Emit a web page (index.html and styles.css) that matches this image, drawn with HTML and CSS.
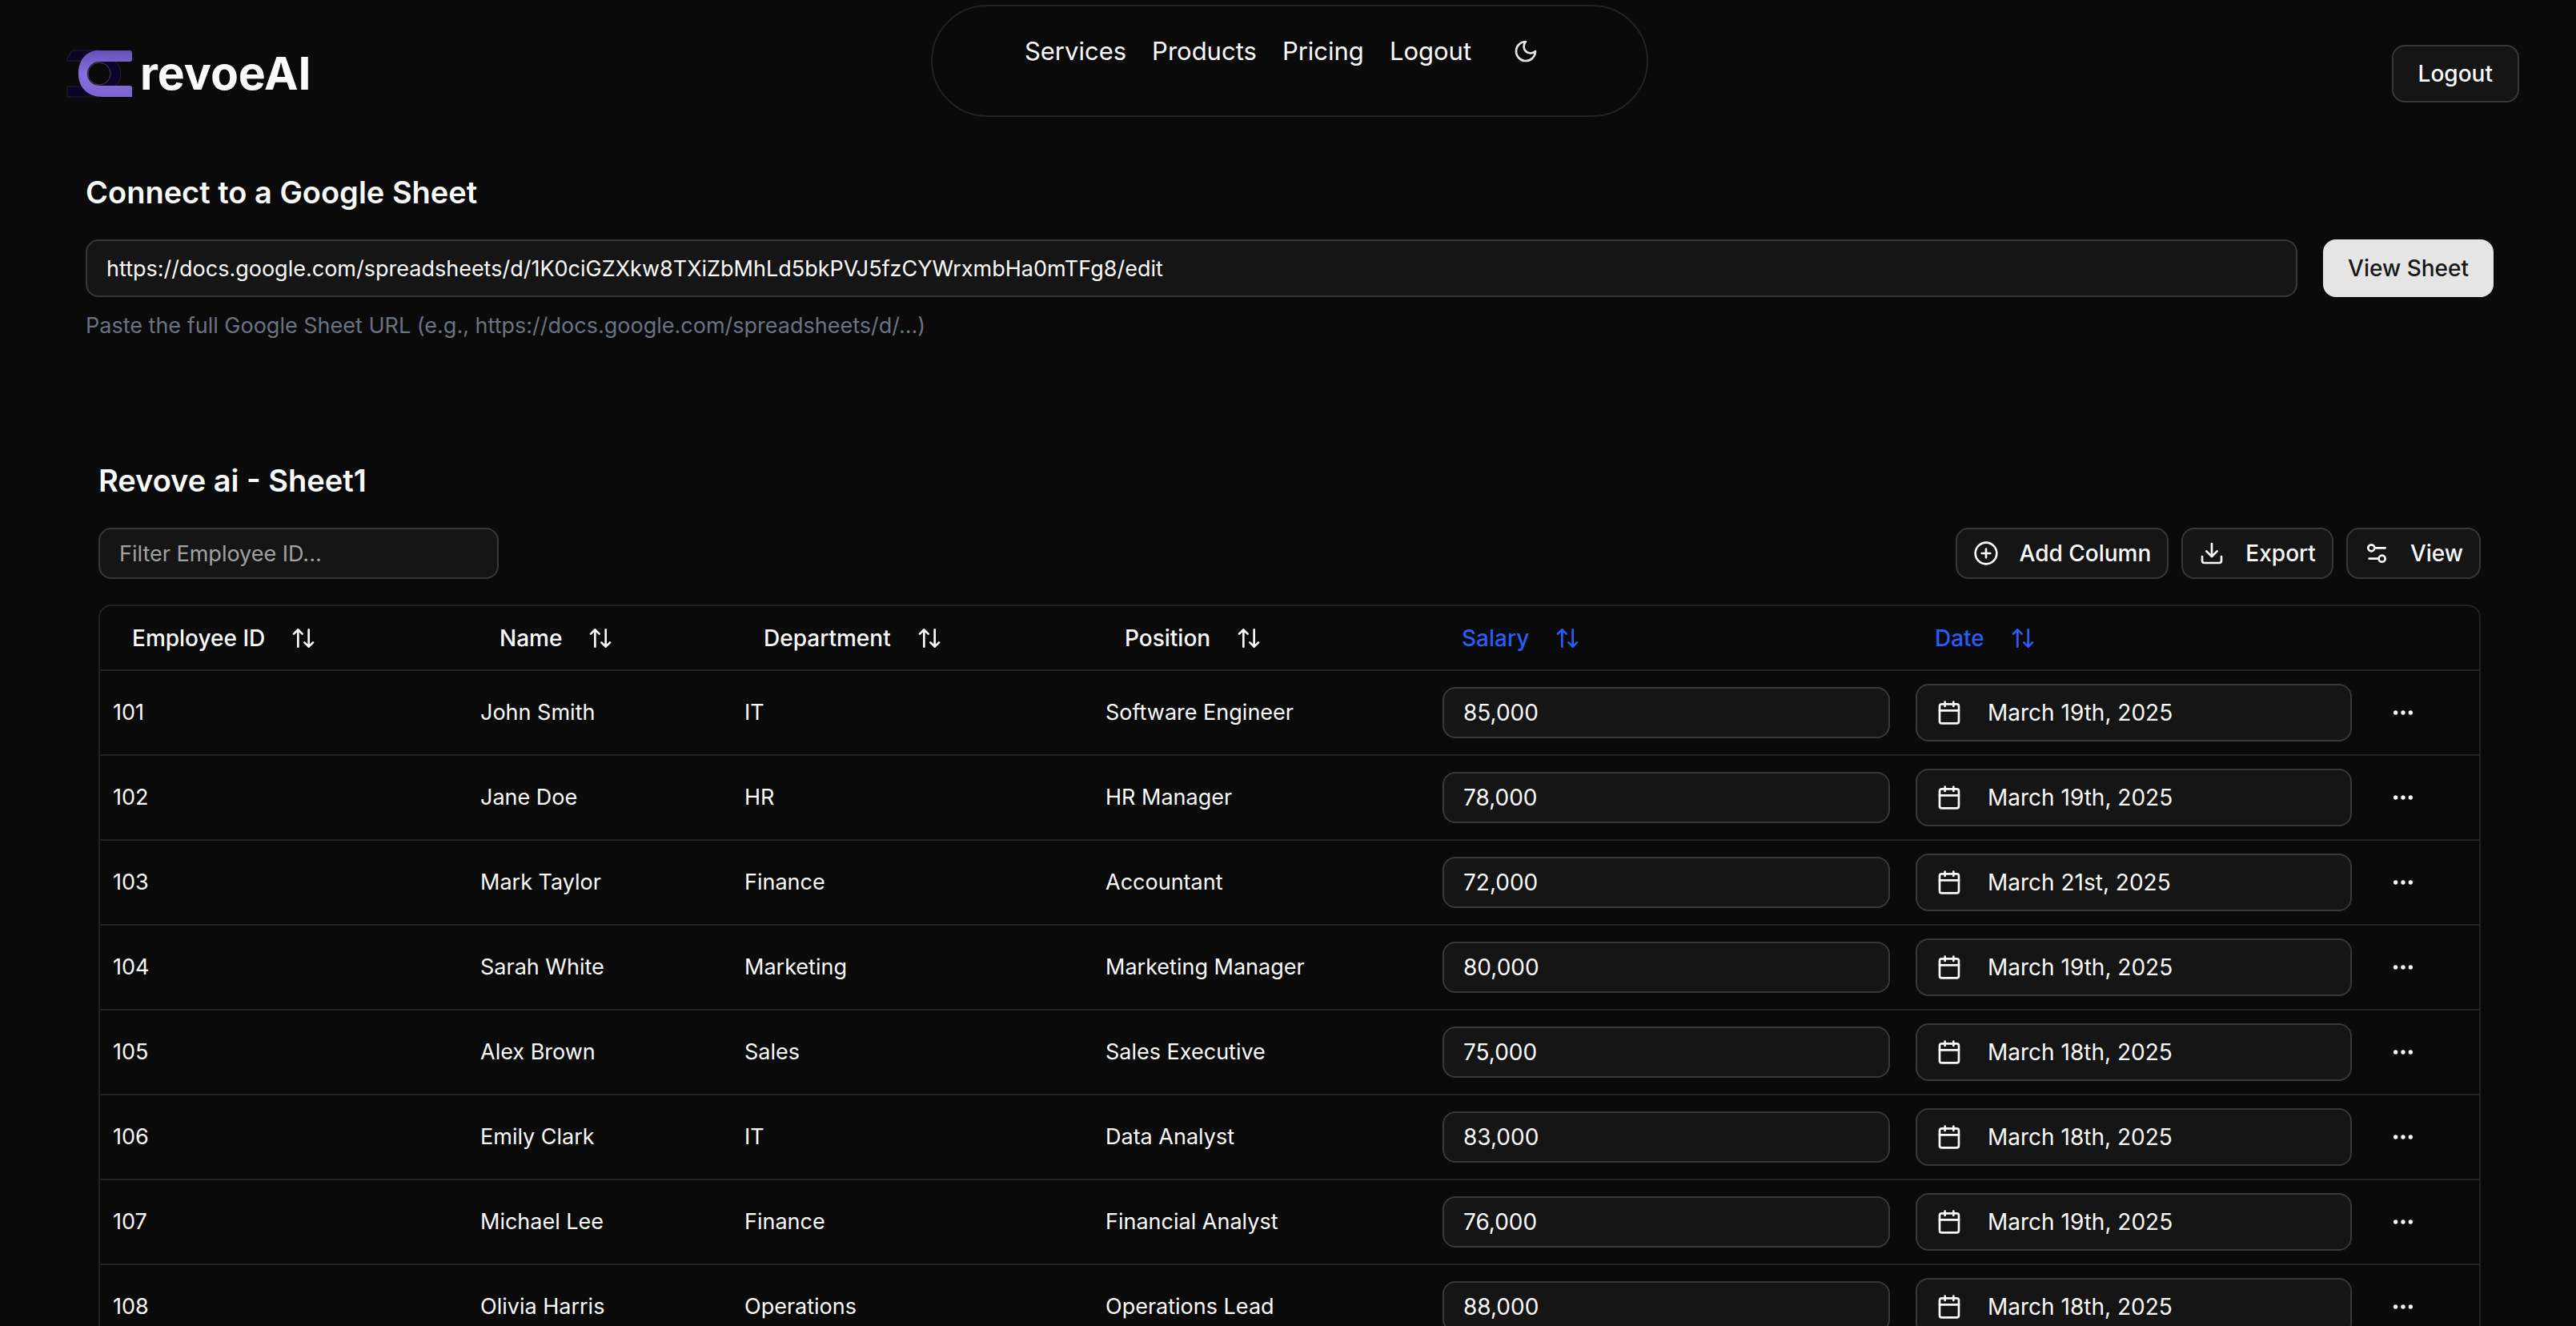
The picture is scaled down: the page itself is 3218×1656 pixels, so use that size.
FILE: index.html
```html
<!DOCTYPE html>
<html lang="en">
<head>
<meta charset="utf-8">
<title>revoeAI</title>
<link rel="stylesheet" href="styles.css">
</head>
<body>
<svg class="sprite" aria-hidden="true">
  <symbol id="sort" viewBox="0 0 24 24"><path d="m3 8 4-4 4 4M7 4v16M21 16l-4 4-4-4M17 20V4"/></symbol>
  <symbol id="calendar" viewBox="0 0 24 24"><path d="M8 2v4M16 2v4M3 10h18"/><rect x="3" y="4" width="18" height="18" rx="2"/></symbol>
  <symbol id="dots" viewBox="0 0 24 24"><circle cx="12" cy="12" r="1"/><circle cx="19" cy="12" r="1"/><circle cx="5" cy="12" r="1"/></symbol>
</svg>
<header class="topbar">
  <a class="brand" href="#">
    <svg class="brand-mark" viewBox="0 0 82 60" aria-hidden="true">
      <defs><linearGradient id="mark" x1="0" y1="0" x2="0" y2="1"><stop offset="0" stop-color="#6650b8"/><stop offset=".5" stop-color="#8470dc"/><stop offset="1" stop-color="#7c64d2"/></linearGradient></defs>
      <path d="M7 1H40V14H1V11Z M1 46H40V59H1Z M41 3H60V14Q68 20 68 30T60 46H41Z" fill="#0c0428" stroke="#25212f"/>
      <path d="M37 1H79Q82 1 82 4V12Q82 15 79 15H41A15 15 0 0 0 41 45H79Q82 45 82 48V59H45C27 59 15 48 15 30C15 13 24 3 37 1Z" fill="url(#mark)"/>
      <circle cx="41" cy="30" r="14" fill="#0a0a0a" stroke="#4b4560"/>
    </svg>
    <span>revoeAI</span>
  </a>
  <nav class="menu">
    <a href="#">Services</a>
    <a href="#">Products</a>
    <a href="#">Pricing</a>
    <a href="#">Logout</a>
    <button class="icon-button theme" type="button" aria-label="Toggle theme"><svg class="icon" viewBox="0 0 24 24"><path d="M12 3a6 6 0 0 0 9 9 9 9 0 1 1-9-9Z"/></svg></button>
  </nav>
  <button class="button logout" type="button">Logout</button>
</header>
<main class="page">
  <form class="connect">
    <h2><label for="url">Connect to a Google Sheet</label></h2>
    <div class="connect-row">
      <input class="field url" id="url" type="text" value="https://docs.google.com/spreadsheets/d/1K0ciGZXkw8TXiZbMhLd5bkPVJ5fzCYWrxmbHa0mTFg8/edit">
      <button class="button primary" type="button">View Sheet</button>
    </div>
    <p class="hint">Paste the full Google Sheet URL (e.g., https://docs.google.com/spreadsheets/d/...)</p>
  </form>
  <section class="sheet">
    <h2>Revove ai - Sheet1</h2>
    <div class="toolbar">
      <input class="field small filter" type="text" placeholder="Filter Employee ID..." aria-label="Filter Employee ID">
      <button class="button small" type="button"><svg class="icon" viewBox="0 0 24 24"><circle cx="12" cy="12" r="10"/><path d="M8 12h8M12 8v8"/></svg>Add Column</button>
      <button class="button small" type="button"><svg class="icon" viewBox="0 0 24 24"><path d="M21 15v4a2 2 0 0 1-2 2H5a2 2 0 0 1-2-2v-4M7 10l5 5 5-5M12 15V3"/></svg>Export</button>
      <button class="button small" type="button"><svg class="icon" viewBox="0 0 24 24"><path d="M20 7h-9M14 17H5"/><circle cx="17" cy="17" r="3"/><circle cx="7" cy="7" r="3"/></svg>View</button>
    </div>
    <div class="table-frame">
      <table>
        <colgroup><col class="c-id"><col class="c-name"><col class="c-dept"><col class="c-pos"><col class="c-salary"><col class="c-date"><col class="c-actions"></colgroup>
        <thead>
          <tr>
            <th><button class="sort" type="button">Employee ID<svg class="icon"><use href="#sort"/></svg></button></th>
            <th><button class="sort" type="button">Name<svg class="icon"><use href="#sort"/></svg></button></th>
            <th><button class="sort" type="button">Department<svg class="icon"><use href="#sort"/></svg></button></th>
            <th><button class="sort" type="button">Position<svg class="icon"><use href="#sort"/></svg></button></th>
            <th><button class="sort custom" type="button">Salary<svg class="icon"><use href="#sort"/></svg></button></th>
            <th><button class="sort custom" type="button">Date<svg class="icon"><use href="#sort"/></svg></button></th>
            <th></th>
          </tr>
        </thead>
        <tbody id="rows"></tbody>
      </table>
    </div>
  </section>
</main>
<script src="rows.js"></script>
</body>
</html>
```
FILE: styles.css
```css
:root {
  --bg: #0a0a0a;
  --text: #fafafa;
  --surface: #151515;
  --line: #222222;
  --control-line: #383838;
  --accent: #2b5cf6;
}

* {
  box-sizing: border-box;
}

html {
  height: 100%;
  overflow: hidden;
}

body {
  margin: 0;
  height: 100%;
  overflow: hidden;
  background: var(--bg);
  color: var(--text);
  font: 28px/40px Inter, "Liberation Sans", sans-serif;
}

a {
  color: inherit;
  text-decoration: none;
}

button,
input {
  font: inherit;
  color: inherit;
}

h2 {
  margin: 0;
  font-size: 38px;
  line-height: 56px;
  font-weight: 600;
}

.sprite {
  display: none;
}

.icon {
  width: 32px;
  height: 32px;
  flex: none;
  fill: none;
  stroke: currentColor;
  stroke-width: 2;
  stroke-linecap: round;
  stroke-linejoin: round;
}

/* Top bar */
.topbar {
  display: grid;
  grid-template-columns: 1fr 896px 1fr;
  align-items: start;
  padding: 6px 71px 0 75px;
}

.brand {
  display: flex;
  align-items: center;
  gap: 10px;
  padding: 50px 0 0 8px;
  font-size: 57px;
  line-height: 72px;
  font-weight: 700;
}

.brand-mark {
  width: 82px;
  height: 60px;
}

.menu {
  display: flex;
  justify-content: center;
  align-items: center;
  gap: 32px;
  padding: 20px 0 44px;
  border: 2px solid var(--line);
  border-radius: 70px;
  font-size: 31px;
}

.icon-button {
  display: flex;
  align-items: center;
  justify-content: center;
  width: 64px;
  height: 64px;
  padding: 0;
  border: 0;
  background: none;
}

.theme {
  width: 72px;
  height: 72px;
  color: #e5e5e5;
}

.button {
  display: flex;
  align-items: center;
  justify-content: center;
  height: 72px;
  padding: 0 31px;
  border: 2px solid var(--control-line);
  border-radius: 16px;
  background: var(--surface);
  font-weight: 500;
  white-space: nowrap;
}

.button.small {
  gap: 26px;
  height: 64px;
  padding: 0 20px;
}

.primary {
  border: 0;
  background: #e5e5e5;
  color: #171717;
}

.logout {
  justify-self: end;
  margin-top: 50px;
}

/* Sheet connection */
.page {
  padding: 66px 103px 0 107px;
}

.connect h2 {
  margin-bottom: 31px;
}

.connect-row {
  display: flex;
  gap: 32px;
}

.field {
  flex: 1;
  min-width: 0;
  width: 100%;
  height: 72px;
  padding: 0 24px;
  border: 2px solid var(--control-line);
  border-radius: 16px;
  background: var(--surface);
}

.url,
.hint,
.filter,
td {
  font-size: 27px;
}

.field.small {
  height: 64px;
}

.field::placeholder {
  color: #a1a1a1;
  opacity: 1;
}

.hint {
  margin: 16px 0 0;
  color: #6a7282;
}

/* Sheet table */
.sheet {
  padding: 145px 16px 0;
}

.toolbar {
  display: flex;
  gap: 16px;
  margin: 31px 0 32px;
}

.toolbar .filter {
  flex: 0 0 500px;
  margin-right: auto;
}

.table-frame {
  border: 2px solid var(--line);
  border-radius: 16px;
}

table {
  width: 100%;
  table-layout: fixed;
  border-spacing: 0;
}

.c-id { width: 459px; }
.c-name { width: 330px; }
.c-dept { width: 451px; }
.c-pos { width: 421px; }
.c-date { width: 577px; }
.c-actions { width: 143px; }

th,
td {
  padding: 0 16px;
  border-bottom: 2px solid var(--line);
  text-align: left;
}

th {
  height: 81px;
}

td {
  height: 106px;
}

.sort {
  display: flex;
  align-items: center;
  gap: 32px;
  padding: 0 24px;
  border: 0;
  background: none;
  font-weight: 500;
}

.custom {
  color: var(--accent);
}

td .field,
.date {
  font-size: 28px;
}

.date {
  display: flex;
  align-items: center;
  gap: 32px;
  width: 100%;
  height: 72px;
  padding: 0 24px;
  border: 2px solid var(--control-line);
  border-radius: 16px;
  background: var(--surface);
}
```
FILE: rows.js
```js
const employees = [
  [101, "John Smith", "IT", "Software Engineer", "85,000", "March 19th, 2025"],
  [102, "Jane Doe", "HR", "HR Manager", "78,000", "March 19th, 2025"],
  [103, "Mark Taylor", "Finance", "Accountant", "72,000", "March 21st, 2025"],
  [104, "Sarah White", "Marketing", "Marketing Manager", "80,000", "March 19th, 2025"],
  [105, "Alex Brown", "Sales", "Sales Executive", "75,000", "March 18th, 2025"],
  [106, "Emily Clark", "IT", "Data Analyst", "83,000", "March 18th, 2025"],
  [107, "Michael Lee", "Finance", "Financial Analyst", "76,000", "March 19th, 2025"],
  [108, "Olivia Harris", "Operations", "Operations Lead", "88,000", "March 18th, 2025"]
];

document.getElementById("rows").innerHTML = employees.map(([id, name, dept, position, salary, date]) => `
  <tr>
    <td>${id}</td><td>${name}</td><td>${dept}</td><td>${position}</td>
    <td><input class="field small" type="text" value="${salary}" aria-label="Salary of ${name}"></td>
    <td><button class="date" type="button"><svg class="icon"><use href="#calendar"/></svg>${date}</button></td>
    <td><button class="icon-button" type="button" aria-label="Actions for ${name}"><svg class="icon"><use href="#dots"/></svg></button></td>
  </tr>`).join("");
```
